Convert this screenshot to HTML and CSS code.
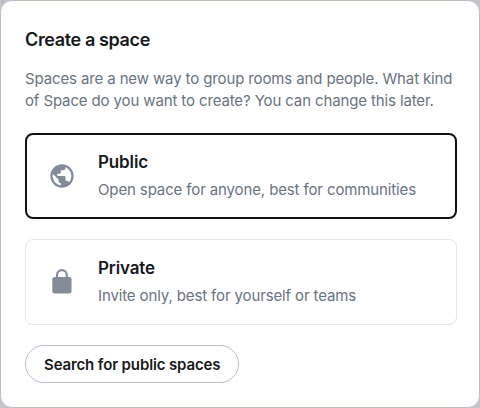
FILE: index.html
```html
<!DOCTYPE html>
<html lang="en">
<head>
<meta charset="utf-8">
<title>Create a space</title>
<link rel="stylesheet" href="styles.css">
</head>
<body>
<main class="dialog">
  <h2 class="title">Create a space</h2>
  <p class="intro">Spaces are a new way to group rooms and people. What kind of Space do you want to create? You can change this later.</p>
  <button class="option option-active">
    <svg class="icon" viewBox="0 0 24 24"><path d="M12 2C6.480 2 2 6.480 2 12s4.480 10 10 10 10-4.480 10-10S17.520 2 12 2zm-1 17.930c-3.950-.49-7-3.850-7-7.930 0-.62.08-1.210.21-1.790L9 15v1c0 1.100.9 2 2 2v1.930zm6.900-2.540c-.26-.81-1-1.390-1.900-1.390h-1v-3c0-.55-.45-1-1-1H8v-2h2c.55 0 1-.45 1-1V7h2c1.100 0 2-.9 2-2v-.41c2.930 1.190 5 4.060 5 7.410 0 2.080-.8 3.970-2.100 5.390z"/></svg>
    <span class="option-text"><span class="option-name">Public</span><span class="option-desc">Open space for anyone, best for communities</span></span>
  </button>
  <button class="option">
    <svg class="icon" viewBox="0 0 28 28"><rect x="4.300" y="9" width="19.200" height="16.500" rx="2.300"/><path class="shackle" d="M9 10V7a4.900 4.900 0 0 1 9.800 0v3"/></svg>
    <span class="option-text"><span class="option-name">Private</span><span class="option-desc">Invite only, best for yourself or teams</span></span>
  </button>
  <button class="search">Search for public spaces</button>
</main>
</body>
</html>
```
FILE: styles.css
```css
* { box-sizing: border-box; }
body {
  margin: 0;
  background: linear-gradient(#a3adb9, #a3adb9) 2px 0 / 1px 4px no-repeat #c5c6c9;
  font-family: Inter, sans-serif;
  font-size: 15px;
  letter-spacing: -0.125px;
  color: #17191c;
}
.dialog {
  width: 480px;
  height: 408px;
  padding: 28px 22px 24px 24px;
  background: #fff;
  border: 1px solid #b9bfc9;
  border-radius: 12px;
}
.title {
  margin: 0;
  font-size: 18px;
  font-weight: 600;
  line-height: 22px;
  letter-spacing: -0.37px;
}
.intro {
  margin: 17px 0 21px;
  line-height: 22px;
  color: #6a7380;
}
.option {
  display: flex;
  align-items: center;
  width: 432px;
  height: 86px;
  margin: 0 0 20px;
  padding: 0 22px;
  font: inherit;
  letter-spacing: inherit;
  text-align: left;
  color: inherit;
  background: #fff;
  border: 1px solid #e5e7ea;
  border-radius: 8px;
}
.option-active {
  padding: 0 21px;
  border: 2px solid #0f1114;
}
.icon {
  width: 28px;
  height: 28px;
  margin-right: 22px;
  fill: #838b98;
}
.shackle {
  fill: none;
  stroke: #838b98;
  stroke-width: 2.1;
}
.option-text { display: flex; flex-direction: column; gap: 4px; }
.option-name { font-size: 17px; font-weight: 600; line-height: 24px; }
.option-desc { line-height: 24px; color: #6a7380; }
.search {
  height: 38px;
  padding: 0 18px;
  font: 600 15px Inter, sans-serif;
  letter-spacing: -0.13px;
  color: #17191c;
  background: #fff;
  border: 1px solid #b6becb;
  border-radius: 19px;
}
```
